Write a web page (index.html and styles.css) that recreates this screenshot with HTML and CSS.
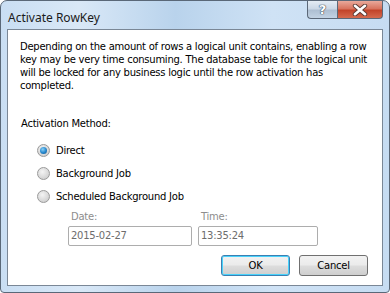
FILE: index.html
```html
<!DOCTYPE html>
<html>
<head>
<meta charset="utf-8">
<link rel="stylesheet" href="styles.css">
</head>
<body>
<div class="window">
  <div class="titlebar">
    <span class="title">Activate RowKey</span>
    <div class="caption">
      <div class="cap-btn help"><span>?</span></div>
      <div class="cap-btn close">
        <svg width="16" height="12" viewBox="0 0 16 12"><path d="M3 1.8 L13 10.2 M13 1.8 L3 10.2" stroke="#5a3a34" stroke-width="4.4" stroke-linecap="round"/><path d="M3 1.8 L13 10.2 M13 1.8 L3 10.2" stroke="#ffffff" stroke-width="2.6" stroke-linecap="round"/></svg>
      </div>
    </div>
  </div>
  <div class="content">
    <p class="desc">Depending on the amount of rows a logical unit contains, enabling a row key may be very time consuming. The database table for the logical unit will be locked for any business logic until the row activation has completed.</p>
    <div class="label">Activation Method:</div>
    <div class="radios">
      <div class="radio-row"><span class="radio checked"></span><span>Direct</span></div>
      <div class="radio-row"><span class="radio"></span><span>Background Job</span></div>
      <div class="radio-row"><span class="radio"></span><span>Scheduled Background Job</span></div>
    </div>
    <div class="schedule">
      <div class="field date">
        <div class="field-label">Date:</div>
        <div class="input">2015-02-27</div>
      </div>
      <div class="field time">
        <div class="field-label">Time:</div>
        <div class="input">13:35:24</div>
      </div>
    </div>
    <div class="buttons">
      <div class="btn default">OK</div>
      <div class="btn">Cancel</div>
    </div>
  </div>
</div>
</body>
</html>
```
FILE: styles.css
```css
html, body { margin: 0; padding: 0; }
body { width: 390px; height: 293px; background: #ffffff; overflow: hidden; }
.window {
  box-sizing: border-box;
  width: 390px; height: 293px;
  border: 1px solid #5a6878;
  border-radius: 7px 7px 4px 4px;
  background: linear-gradient(90deg, #c9def3 0%, #d9e8f7 20%, #b9d3ec 45%, #cfe2f5 70%, #c6dcf2 100%);
  padding: 0 6px 6px 6px;
  display: flex; flex-direction: column;
  font-family: "DejaVu Sans", sans-serif;
}
.titlebar {
  height: 28px; flex: none;
  display: flex; align-items: flex-start;
}
.title {
  font-family: "Noto Sans", "Open Sans", sans-serif;
  font-size: 12px; color: #1b1b1b;
  margin-top: 8px; margin-left: 1px;
}
.caption { margin-left: auto; margin-right: 0; display: flex; }
.cap-btn {
  height: 18px; box-sizing: border-box;
  border: 1px solid #5b6878; border-top: none;
  display: flex; align-items: center; justify-content: center;
}
.help {
  width: 30px; border-radius: 0 0 0 4px; border-right: none;
  background: linear-gradient(180deg, #e4ecf4 0%, #cbd8e6 45%, #aebfd2 55%, #c2d2e3 100%);
  font-family: "DejaVu Sans", sans-serif; font-weight: bold; font-size: 13px;
  color: #ffffff; text-shadow: 0 0 1px #3b4a5a, 0 0 1px #3b4a5a, 0 0 1px #3b4a5a;
}
.close {
  width: 46px; border-radius: 0 0 4px 0;
  background: linear-gradient(180deg, #e9a99b 0%, #d8745f 45%, #c2442a 55%, #d56a4e 100%);
}
.content {
  flex: 1; box-sizing: border-box;
  background: #ffffff;
  border: 1px solid #7a8796;
  padding: 10px 6px 0 12px;
  display: flex; flex-direction: column;
  font-family: "DejaVu Sans", sans-serif; font-size: 10px; letter-spacing: -0.25px;
  color: #000000;
}
.desc { margin: 0; line-height: 13px; }
.label { margin-top: 26px; margin-left: 1px; }
.radios { display: flex; flex-direction: column; gap: 9px; margin-top: 14px; margin-left: 17px; }
.radio-row { display: flex; align-items: center; height: 14px; gap: 6px; }
.radio {
  width: 13px; height: 13px; box-sizing: border-box;
  border-radius: 50%; border: 1px solid #9a9a9a;
  background: radial-gradient(circle at 40% 35%, #f4f4f4 0%, #d8d8d8 60%, #c4c4c4 100%);
  position: relative;
}
.radio.checked::after {
  content: ""; position: absolute; left: 2px; top: 2px; width: 7px; height: 7px; border-radius: 50%;
  background: radial-gradient(circle at 40% 35%, #8ad0f6 0%, #2a8bd0 50%, #0b4f8a 100%);
}
.schedule { display: flex; gap: 6px; margin-top: 8px; margin-left: 48px; }
.field { display: flex; flex-direction: column; }
.field-label { color: #8d8d8d; margin-left: 3px; height: 14px; }
.input {
  box-sizing: border-box; width: 124px; height: 20px; margin-top: 1px;
  border: 1px solid #adadad; border-radius: 2px;
  color: #6d6d6d; padding: 3px 2px 0 2px;
}
.time .input { width: 120px; }
.buttons { display: flex; justify-content: flex-end; gap: 9px; margin-top: 9px; margin-right: 8px; }
.btn {
  box-sizing: border-box; width: 69px; height: 21px;
  border: 1px solid #707070; border-radius: 3px;
  background: linear-gradient(180deg, #f2f2f2 0%, #ebebeb 48%, #dddddd 52%, #cfcfcf 100%);
  display: flex; align-items: center; justify-content: center;
}
.btn.default { border-color: #3c7fb1; box-shadow: inset 0 0 0 1px #48d2fb; }
```
